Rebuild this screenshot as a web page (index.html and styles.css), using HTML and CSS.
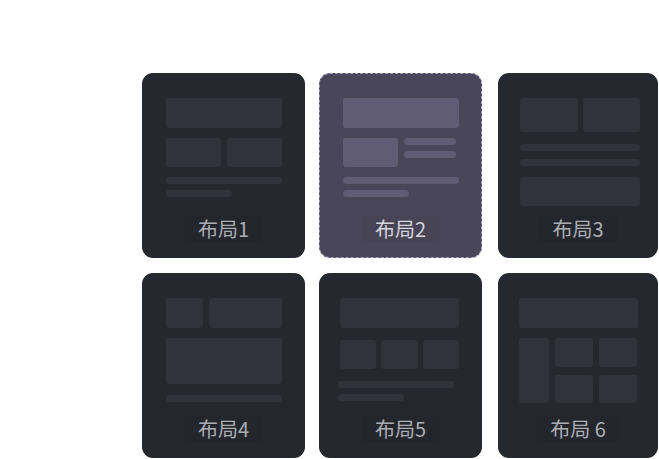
FILE: index.html
```html
<!DOCTYPE html>
<html lang="zh-CN">
<head>
<meta charset="utf-8">
<title>布局</title>
<link rel="stylesheet" href="styles.css">
</head>
<body>
<div class="grid">
  <div class="card">
    <div class="preview">
      <div class="blk h30"></div>
      <div class="row mt10 g6">
        <div class="blk h29 f1"></div>
        <div class="blk h29 f1"></div>
      </div>
      <div class="line mt10"></div>
      <div class="line mt6 w66"></div>
    </div>
    <div class="label">布局1</div>
  </div>

  <div class="card active">
    <div class="preview">
      <div class="blk h30"></div>
      <div class="row mt10 g6">
        <div class="blk h29 w55"></div>
        <div class="col g6">
          <div class="line w52"></div>
          <div class="line w52"></div>
        </div>
      </div>
      <div class="line mt10"></div>
      <div class="line mt6 w66"></div>
    </div>
    <div class="label">布局2</div>
  </div>

  <div class="card c3">
    <div class="preview p22">
      <div class="row g5">
        <div class="blk h34 f1"></div>
        <div class="blk h34 f1"></div>
      </div>
      <div class="line mt12"></div>
      <div class="line mt8"></div>
      <div class="blk h29 mt11 w120"></div>
    </div>
    <div class="label">布局3</div>
  </div>

  <div class="card">
    <div class="preview">
      <div class="row g6">
        <div class="blk h30 w37"></div>
        <div class="blk h30 f1"></div>
      </div>
      <div class="blk h46 mt10"></div>
      <div class="line mt11"></div>
    </div>
    <div class="label">布局4</div>
  </div>

  <div class="card">
    <div class="preview p21">
      <div class="blk h30"></div>
      <div class="row mt12 g5">
        <div class="blk h29 f1"></div>
        <div class="blk h29 f1"></div>
        <div class="blk h29 f1"></div>
      </div>
      <div class="line mt12 shift w116"></div>
      <div class="line mt6 shift w66"></div>
    </div>
    <div class="label">布局5</div>
  </div>

  <div class="card c3">
    <div class="preview p21b">
      <div class="blk h30"></div>
      <div class="mosaic mt10">
        <div class="blk tall"></div>
        <div class="blk"></div>
        <div class="blk"></div>
        <div class="blk"></div>
        <div class="blk"></div>
      </div>
    </div>
    <div class="label">布局 6</div>
  </div>
</div>
</body>
</html>
```

FILE: styles.css
```css
* { box-sizing: border-box; }

html, body {
  margin: 0;
  padding: 0;
  background: #ffffff;
  overflow: hidden;
}

body {
  font-family: "Noto Sans CJK SC", "Noto Sans", sans-serif;
}

.grid {
  display: grid;
  grid-template-columns: 163px 163px 162px;
  grid-auto-rows: 185px;
  column-gap: 14px;
  row-gap: 15px;
  margin: 73px 0 0 142px;
}

.card {
  display: flex;
  flex-direction: column;
  align-items: center;
  background: #262830;
  border-radius: 11px;
  padding: 25px 0 16px;
}

.card.c3 {
  margin-left: 2px;
}

.card.active {
  background: #484658;
  border: 1px dashed #a19bbb;
  padding-top: 24px;
  padding-bottom: 15px;
}

.preview {
  align-self: stretch;
  display: flex;
  flex-direction: column;
  padding: 0 23px 0 24px;
}

.preview.p22 { padding: 0 18px 0 22px; }
.preview.p21 { padding: 0 23px 0 21px; }
.preview.p21b { padding: 0 20px 0 21px; }

.card.active .preview {
  padding: 0 22px 0 23px;
}

.blk {
  background: #30333c;
  border-radius: 3px;
}

.line {
  height: 7px;
  background: #30333c;
  border-radius: 4px;
}

.card.active .blk,
.card.active .line {
  background: #605c73;
}

.row { display: flex; }
.col { display: flex; flex-direction: column; }

.f1 { flex: 1; }
.g5 { gap: 5px; }
.g6 { gap: 6px; }

.h29 { height: 29px; }
.h30 { height: 30px; }
.h34 { height: 34px; }
.h46 { height: 46px; }

.w37 { width: 37px; }
.w52 { width: 52px; }
.w55 { width: 55px; }
.w66 { width: 66px; }
.w116 { width: 116px; }
.w120 { width: 120px; }

.mt6 { margin-top: 6px; }
.mt8 { margin-top: 8px; }
.mt10 { margin-top: 10px; }
.mt11 { margin-top: 11px; }
.mt12 { margin-top: 12px; }

.shift { margin-left: -2px; }

.mosaic {
  display: grid;
  grid-template-columns: 30px 38px 38px;
  grid-template-rows: 29px 28px;
  column-gap: 6px;
  row-gap: 8px;
}

.mosaic .tall {
  grid-row: 1 / span 2;
}

.label {
  margin-top: auto;
  font-size: 20px;
  line-height: 27px;
  padding: 0 14px;
  color: #abadb4;
  background: rgba(0, 0, 0, 0.03);
  border-radius: 4px;
  white-space: nowrap;
}

.card.active .label {
  color: #d6d4de;
  background: rgba(0, 0, 0, 0.025);
}
```
